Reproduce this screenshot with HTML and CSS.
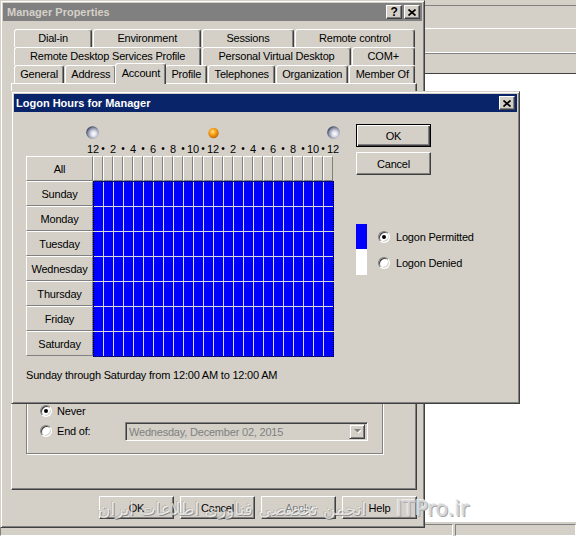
FILE: index.html
```html
<!DOCTYPE html>
<html>
<head>
<meta charset="utf-8">
<title>Logon Hours for Manager</title>
<link rel="stylesheet" href="styles.css">
</head>
<body>
<div class="screen">
  <div class="tb tb0"></div>
  <div class="tb tb1"></div>
  <div class="tb tb2"></div>
  <div class="tb tb3"></div>
  <div class="mmc-body"></div>
  <div class="statusbar"><div class="sb-cell sb-main"></div><div class="sb-cell sb-rest"></div></div>

  <div class="win props">
    <div class="titlebar inactive">
      <span class="title">Manager Properties</span>
      <span class="capbtn help">?</span>
      <span class="capbtn close"><svg width="8" height="7" viewBox="0 0 8 7"><path d="M0.5 0.5L7.5 6.5M7.5 0.5L0.5 6.5" stroke="#000" stroke-width="1.7"/></svg></span>
    </div>
    <div class="tabs">
      <div class="tabrow">
        <span class="tab">Dial-in</span>
        <span class="tab">Environment</span>
        <span class="tab">Sessions</span>
        <span class="tab">Remote control</span>
      </div>
      <div class="tabrow">
        <span class="tab">Remote Desktop Services Profile</span>
        <span class="tab">Personal Virtual Desktop</span>
        <span class="tab">COM+</span>
      </div>
      <div class="tabrow">
        <span class="tab">General</span>
        <span class="tab">Address</span>
        <span class="tab active">Account</span>
        <span class="tab">Profile</span>
        <span class="tab">Telephones</span>
        <span class="tab">Organization</span>
        <span class="tab">Member Of</span>
      </div>
    </div>
    <div class="panel">
      <div class="group">
        <span class="group-label">Account expires</span>
        <div class="opt">
          <span class="optl"><span class="radio on"></span><span class="rlabel">Never</span></span>
        </div>
        <div class="opt">
          <span class="optl"><span class="radio"></span><span class="rlabel">End of:</span></span>
          <span class="combo"><span class="combo-text">Wednesday, December 02, 2015</span><span class="combo-btn"><svg width="7" height="5" viewBox="0 0 7 5"><path d="M1 1H8L4.5 4.5Z" fill="#fff"/><path d="M0 0H7L3.5 3.5Z" fill="#808080"/></svg></span></span>
        </div>
      </div>
    </div>
    <div class="btnrow">
      <span class="btn">OK</span>
      <span class="btn">Cancel</span>
      <span class="btn disabled">Apply</span>
      <span class="btn">Help</span>
    </div>
  </div>

  <div class="win dialog">
    <div class="titlebar active-title">
      <span class="title">Logon Hours for Manager</span>
      <span class="capbtn close"><svg width="8" height="7" viewBox="0 0 8 7"><path d="M0.5 0.5L7.5 6.5M7.5 0.5L0.5 6.5" stroke="#000" stroke-width="1.7"/></svg></span>
    </div>
    <div class="dbody">
      <div class="lcol">
        <div class="sky">
          <svg class="orb" width="13" height="13" viewBox="0 0 13 13"><defs><radialGradient id="m1" cx="0.6" cy="0.6" r="0.6"><stop offset="0" stop-color="#ffffff"/><stop offset="0.35" stop-color="#dde0ea"/><stop offset="0.75" stop-color="#8d93a8"/><stop offset="1" stop-color="#454b63"/></radialGradient></defs><circle cx="6.5" cy="6.5" r="6.3" fill="url(#m1)"/></svg>
          <svg class="orb" width="13" height="13" viewBox="0 0 13 13"><defs><radialGradient id="s1" cx="0.42" cy="0.38" r="0.62"><stop offset="0" stop-color="#ffe08a"/><stop offset="0.45" stop-color="#f7a51c"/><stop offset="1" stop-color="#c86a00"/></radialGradient></defs><circle cx="6.5" cy="7" r="5.2" fill="url(#s1)"/></svg>
          <svg class="orb" width="13" height="13" viewBox="0 0 13 13"><defs><radialGradient id="m2" cx="0.6" cy="0.6" r="0.6"><stop offset="0" stop-color="#ffffff"/><stop offset="0.35" stop-color="#dde0ea"/><stop offset="0.75" stop-color="#8d93a8"/><stop offset="1" stop-color="#454b63"/></radialGradient></defs><circle cx="6.5" cy="6.5" r="6.3" fill="url(#m2)"/></svg>
        </div>
        <div class="hlabels">
          <span class="hl">12</span><span class="hl dot">•</span><span class="hl">2</span><span class="hl dot">•</span><span class="hl">4</span><span class="hl dot">•</span><span class="hl">6</span><span class="hl dot">•</span><span class="hl">8</span><span class="hl dot">•</span><span class="hl">10</span><span class="hl dot">•</span><span class="hl">12</span><span class="hl dot">•</span><span class="hl">2</span><span class="hl dot">•</span><span class="hl">4</span><span class="hl dot">•</span><span class="hl">6</span><span class="hl dot">•</span><span class="hl">8</span><span class="hl dot">•</span><span class="hl">10</span><span class="hl dot">•</span><span class="hl">12</span>
        </div>
        <div class="table">
          <div class="days">
            <span class="day">All</span>
            <span class="day">Sunday</span>
            <span class="day">Monday</span>
            <span class="day">Tuesday</span>
            <span class="day">Wednesday</span>
            <span class="day">Thursday</span>
            <span class="day">Friday</span>
            <span class="day">Saturday</span>
          </div>
          <div class="hours">
            <div class="hdr">
              <span class="hc"></span><span class="hc"></span><span class="hc"></span><span class="hc"></span><span class="hc"></span><span class="hc"></span><span class="hc"></span><span class="hc"></span><span class="hc"></span><span class="hc"></span><span class="hc"></span><span class="hc"></span><span class="hc"></span><span class="hc"></span><span class="hc"></span><span class="hc"></span><span class="hc"></span><span class="hc"></span><span class="hc"></span><span class="hc"></span><span class="hc"></span><span class="hc"></span><span class="hc"></span><span class="hc"></span>
            </div>
            <div class="cells"></div>
          </div>
        </div>
        <div class="summary">Sunday through Saturday from 12:00 AM to 12:00 AM</div>
      </div>
      <div class="rcol">
        <span class="btn default">OK</span>
        <span class="btn cancel">Cancel</span>
        <div class="legend">
          <div class="swatch"><div class="sw-blue"></div><div class="sw-white"></div></div>
          <div class="choices">
            <div class="choice"><span class="radio on"></span><span class="clabel">Logon Permitted</span></div>
            <div class="choice"><span class="radio"></span><span class="clabel">Logon Denied</span></div>
          </div>
        </div>
      </div>
    </div>
  </div>

  <div class="wm">
    <span class="wm-fa" dir="rtl">انجمن تخصصی فناوری اطلاعات ایران</span>
    <span class="wm-en">ITPro.ir</span>
  </div>
</div>
</body>
</html>
```

FILE: styles.css
```css
* { box-sizing: border-box; }
html, body { margin: 0; padding: 0; }
body {
  width: 576px;
  height: 536px;
  overflow: hidden;
  background: #fff;
  font-family: "Liberation Sans", Arial, sans-serif;
  font-size: 11px;
  letter-spacing: -0.2px;
  color: #000;
}
.screen {
  position: relative;
  width: 576px;
  height: 536px;
  display: flex;
  flex-direction: column;
  background: #fff;
}

/* background console toolbars */
.tb { background: #d4d0c8; flex: none; }
.tb0 { height: 6px; border-bottom: 1px solid #808080; }
.tb1 { height: 23px; border-bottom: 1px solid #fff; }
.tb2 { height: 24px; border-bottom: 1px solid #fff; }
.tb3 { height: 21px; border-top: 1px solid #808080; border-bottom: 1px solid #404040; }
.mmc-body { flex: 1; background: #fff; }
.statusbar {
  height: 15px;
  flex: none;
  background: #d4d0c8;
  border-top: 1px solid #fff;
  display: flex;
  gap: 2px;
  padding-top: 2px;
}
.sb-cell {
  border-top: 1px solid #808080;
  border-left: 1px solid #808080;
  border-bottom: 1px solid #fff;
  border-right: 1px solid #fff;
}
.sb-main { width: 453px; }
.sb-rest { flex: 1; }

/* windows */
.win {
  position: absolute;
  background: #d4d0c8;
  border: 1px solid;
  border-color: #d4d0c8 #404040 #404040 #d4d0c8;
  box-shadow: inset 1px 1px #fff, inset -1px -1px #808080;
  padding: 2px;
  display: flex;
  flex-direction: column;
}
.props { left: 0; top: 0; width: 425px; height: 528px; }
.dialog { left: 11px; top: 91px; width: 509px; height: 313px; z-index: 2; }

.titlebar {
  height: 18px;
  flex: none;
  display: flex;
  align-items: center;
  gap: 2px;
  padding: 0 2px 0 4px;
}
.titlebar .title { flex: 1; font-weight: bold; font-size: 11px; letter-spacing: 0; white-space: nowrap; }
.inactive { background: #808080; color: #d4d0c8; }
.active-title { background: #0a246a; color: #fff; padding-left: 2px; }
.capbtn {
  width: 16px;
  height: 14px;
  flex: none;
  background: #d4d0c8;
  border: 1px solid;
  border-color: #fff #404040 #404040 #fff;
  box-shadow: inset -1px -1px #808080;
  display: flex;
  align-items: center;
  justify-content: center;
  color: #000;
  font-weight: bold;
  font-size: 12px;
  line-height: 12px;
}

/* tabs */
.tabs { margin: 8px 7px 0 11px; flex: none; }
.tabrow { display: flex; height: 18px; gap: 1px; align-items: flex-start; }
.tab {
  flex: 1 1 auto;
  height: 18px;
  padding: 0 3px;
  border-top: 1px solid #fff;
  border-left: 1px solid #fff;
  border-right: 1px solid #404040;
  box-shadow: inset -1px 0 #808080;
  border-radius: 3px 3px 0 0;
  background: #d4d0c8;
  text-align: center;
  line-height: 16px;
  white-space: nowrap;
}
.tab.active {
  position: relative;
  z-index: 1;
  height: 21px;
  margin: -2px -2px -1px;
  line-height: 18px;
}

/* property page */
.panel {
  flex: none;
  margin-left: 8px;
  width: 406px;
  height: 407px;
  border: 1px solid;
  border-color: #fff #404040 #404040 #fff;
  box-shadow: inset -1px -1px #808080;
  display: flex;
  flex-direction: column;
  justify-content: flex-end;
  padding: 0 0 35px 14px;
}
.group {
  position: relative;
  width: 357px;
  height: 72px;
  border: 1px solid #808080;
  box-shadow: 1px 1px 0 #fff, inset 1px 1px 0 #fff;
  display: flex;
  flex-direction: column;
  justify-content: flex-end;
  padding: 0 0 12px 13px;
}
.group-label { position: absolute; left: 6px; top: -7px; padding: 0 2px; background: #d4d0c8; }
.opt { display: flex; align-items: center; height: 20px; }
.optl { width: 85px; display: flex; align-items: center; flex: none; }
.rlabel { margin-left: 5px; }
.combo {
  width: 243px;
  height: 19px;
  margin-top: 1px;
  border: 1px solid;
  border-color: #808080 #fff #fff #808080;
  box-shadow: inset 1px 1px #404040, inset -1px -1px #d4d0c8;
  display: flex;
  align-items: center;
  padding: 2px;
}
.combo-text { flex: 1; color: #808080; padding-left: 1px; white-space: nowrap; }
.combo-btn {
  width: 16px;
  height: 15px;
  border: 1px solid;
  border-color: #d4d0c8 #404040 #404040 #d4d0c8;
  box-shadow: inset 1px 1px #fff, inset -1px -1px #808080;
  display: flex;
  align-items: center;
  justify-content: center;
}

/* buttons */
.btnrow {
  flex: none;
  display: flex;
  justify-content: flex-end;
  gap: 6px;
  margin-top: 6px;
  padding-right: 5px;
}
.btn {
  width: 75px;
  height: 23px;
  flex: none;
  display: flex;
  align-items: center;
  justify-content: center;
  background: #d4d0c8;
  border: 1px solid;
  border-color: #fff #404040 #404040 #fff;
  box-shadow: inset -1px -1px #808080;
}
.btn.default {
  border-color: #000;
  box-shadow: inset 1px 1px #fff, inset -1px -1px #404040, inset -2px -2px #808080;
}
.btn.disabled { color: #808080; text-shadow: 1px 1px 0 #fff; }

/* radios */
.radio {
  position: relative;
  flex: none;
  width: 12px;
  height: 12px;
  border-radius: 50%;
  background: #fff;
  border: 1px solid;
  border-color: #808080 #fff #fff #808080;
  box-shadow: inset 1px 1px #404040, inset -1px -1px #d4d0c8;
}
.radio.on::after {
  content: "";
  position: absolute;
  left: 3px;
  top: 3px;
  width: 4px;
  height: 4px;
  border-radius: 50%;
  background: #000;
}

/* logon hours dialog body */
.dbody { flex: 1; display: flex; padding: 12px 0 0 12px; }
.lcol { width: 330px; flex: none; margin-top: 2px; display: flex; flex-direction: column; }
.sky { margin-left: 60px; width: 254px; height: 13px; display: flex; justify-content: space-between; align-items: center; }
.orb { display: block; }
.hlabels { margin: 3px 0 0 62px; height: 14px; display: flex; letter-spacing: 0; }
.hl { width: 10px; flex: none; display: flex; justify-content: center; white-space: nowrap; line-height: 14px; }
.hl.dot { font-size: 10px; }
.table { display: flex; }
.days { width: 67px; flex: none; display: flex; flex-direction: column; }
.day {
  height: 25px;
  display: flex;
  align-items: center;
  justify-content: center;
  border: 1px solid;
  border-color: #fff #808080 #808080 #fff;
}
.hours { width: 241px; flex: none; display: flex; flex-direction: column; }
.hdr { display: flex; height: 25px; }
.hc {
  width: 10px;
  flex: none;
  border: 1px solid;
  border-color: #fff #808080 #808080 #fff;
}
.cells {
  height: 176px;
  border: 1px dotted #000;
  background:
    repeating-linear-gradient(180deg, transparent 0 24px, #d8d8e0 24px 25px),
    repeating-linear-gradient(90deg, #0000ff 0 9px, #d8d8e0 9px 10px);
}
.summary { margin-top: 11px; line-height: 14px; white-space: nowrap; }

.rcol { width: 140px; flex: none; display: flex; flex-direction: column; align-items: flex-start; }
.btn.cancel { margin-top: 5px; }
.legend { margin-top: 49px; display: flex; }
.swatch { width: 11px; flex: none; }
.sw-blue { height: 25px; background: #0000ff; }
.sw-white { height: 26px; background: #fff; }
.choices { margin-left: 11px; display: flex; flex-direction: column; }
.choice { height: 26px; display: flex; align-items: center; }
.clabel { margin-left: 6px; white-space: nowrap; }

/* watermark overlay */
.wm {
  position: absolute;
  left: 98px;
  top: 494px;
  z-index: 3;
  height: 28px;
  display: flex;
  align-items: flex-end;
  gap: 30px;
  pointer-events: none;
  letter-spacing: 0;
}
.wm-fa {
  font-family: "DejaVu Sans", sans-serif;
  font-size: 17px;
  line-height: 26px;
  color: rgba(255, 255, 255, 0.7);
  text-shadow: 1px 1px 0 rgba(90, 90, 90, 0.55), -1px -1px 0 rgba(150, 150, 150, 0.4);
  white-space: nowrap;
}
.wm-en {
  font-family: "DejaVu Sans", sans-serif;
  font-size: 21px;
  line-height: 26px;
  color: #d6d6d6;
  text-shadow: 1px 1px 0 #a8a8a8, -1px -1px 0 #ececec;
  white-space: nowrap;
}
```
